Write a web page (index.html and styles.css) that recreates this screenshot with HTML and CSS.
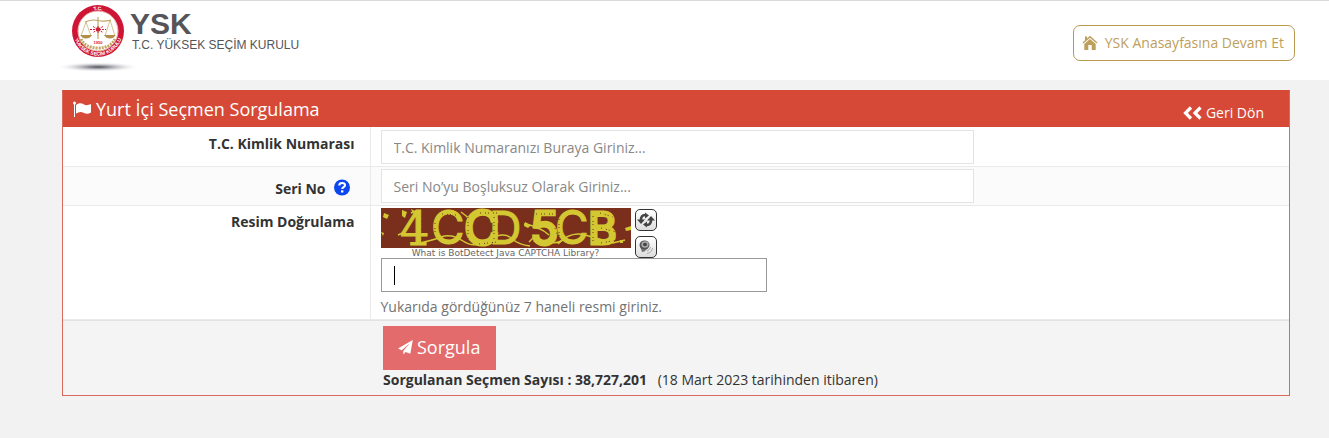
FILE: index.html
```html
<!DOCTYPE html>
<html lang="tr">
  <head>
    <meta charset="utf-8">
    <title>Yurt İçi Seçmen Sorgulama</title>
    <link rel="stylesheet" href="styles.css">
  </head>
  <body>
    <header class="top">
      <div class="brand">
        <svg class="emblem" width="84" height="72" viewBox="0 0 84 72" aria-hidden="true">
          <defs>
            <radialGradient id="shade">
              <stop offset="0" stop-color="#55555f" />
              <stop offset="0.3" stop-color="#a0a0a8" />
              <stop offset="1" stop-color="#fff" stop-opacity="0" />
            </radialGradient>
            <path id="ring_bottom" d="M13.400 26 A24.600 24.600 0 0 0 62.600 26" />
            <path id="ring_top" d="M17 26 A21 21 0 0 1 59 26" />
          </defs>
          <ellipse cx="38" cy="62" rx="42" ry="5" fill="url(#shade)" />
          <circle cx="38" cy="26" r="26" fill="#cf1535" />
          <circle cx="38" cy="26" r="20" fill="#fff" stroke="#e8b0a8" />
          <text class="ring_text"><textPath href="#ring_bottom" startOffset="50%" text-anchor="middle">YÜKSEK SEÇİM KURULU</textPath></text>
          <text class="ring_text"><textPath href="#ring_top" startOffset="50%" text-anchor="middle">T.C.</textPath></text>
          <g fill="none" stroke="#c4a566">
            <path d="M38 12V34M25 17Q32 14 38 15.500T51 15" stroke-width="1.200" />
            <path d="M26 17L21 31M26 17L31 31M50 15L45 31M50 15L55 31" stroke-width=".7" />
            <path d="M21 34Q25 43 38 43T55 34" stroke-width="3" stroke-dasharray="2 1" />
          </g>
          <path d="M20.500 30H32Q30 33.500 26 33.500T20.500 30ZM44 30H55.500Q54 33.500 50 33.500T44 30Z" fill="#b28e48" />
          <circle cx="38" cy="24.500" r="2.200" fill="#d22038" />
          <path d="M30 24.500H46M33 21.500L43 27.500M43 21.500L33 27.500M38 21V28" stroke="#d22038" stroke-dasharray="2 1" />
          <text class="year" x="38" y="39" text-anchor="middle">1950</text>
        </svg>
        <div class="brand_text">
          <strong>YSK</strong>
          <span>T.C. YÜKSEK SEÇİM KURULU</span>
        </div>
      </div>
      <a class="home_link" href="#">
        <svg width="16" height="16" viewBox="0 0 16 16" aria-hidden="true">
          <path d="M8 .8L5 3.500V1.500H3V5.300L.5 7.500L1.400 8.500L8 2.700L14.600 8.500L15.500 7.500Z" fill="currentColor" />
          <path d="M8 4L2.300 9V15H6.300V10H9.700V15H13.700V9Z" fill="currentColor" />
        </svg>
        YSK Anasayfasına Devam Et
      </a>
    </header>

    <form class="panel">
      <div class="panel_head">
        <h1>
          <svg width="19" height="18" viewBox="0 0 19 18" aria-hidden="true">
            <path d="M1.500 3V17" stroke="#fff" />
            <circle cx="1.500" cy="3" r="1.500" fill="#fff" />
            <path d="M3 5C6 2.500 8.500 3 11 4.500C13.500 5.800 15.500 5 18 4V12.500C15.500 14 13 14.200 10.500 12.800C8 11.500 5.500 12 3 13.500Z" fill="#fff" />
          </svg>
          Yurt İçi Seçmen Sorgulama
        </h1>
        <a href="#">
          <svg width="19" height="14" viewBox="0 0 19 14" aria-hidden="true">
            <path d="M8 1.500L2.500 7L8 12.500M17.500 1.500L12 7L17.500 12.500" fill="none" stroke="#fff" stroke-width="3.200" />
          </svg>
          Geri Dön
        </a>
      </div>

      <div class="row">
        <div class="label_cell"><label for="tc_no">T.C. Kimlik Numarası</label></div>
        <div class="field_cell">
          <input class="text_box" type="text" id="tc_no" placeholder="T.C. Kimlik Numaranızı Buraya Giriniz...">
        </div>
      </div>

      <div class="row striped">
        <div class="label_cell seri">
          <label for="seri_no">Seri No</label>
          <svg width="18" height="18" viewBox="0 0 18 18" aria-hidden="true">
            <circle cx="9" cy="8.500" r="8" fill="#0b46f0" />
            <path d="M6.200 6.500C6.300 4.700 7.500 4 9.100 4C10.800 4 12 4.900 12 6.300C12 8.200 9.200 8.100 9.200 10.100" fill="none" stroke="#fff" stroke-width="2.100" />
            <path d="M8 11.300H10.400V13.500H8Z" fill="#fff" />
          </svg>
        </div>
        <div class="field_cell">
          <input class="text_box" type="text" id="seri_no" placeholder="Seri No’yu Boşluksuz Olarak Giriniz...">
        </div>
      </div>

      <div class="row">
        <div class="label_cell resim"><label for="captcha">Resim Doğrulama</label></div>
        <div class="field_cell captcha_cell">
          <div class="captcha">
            <div class="captcha_picture">
              <svg width="250" height="40" viewBox="0 0 250 40" role="img" aria-label="CAPTCHA">
                <rect width="250" height="40" fill="#7a2f1d" />
                <g class="captcha_letters">
                  <text class="serif" x="19" y="37" font-size="46">4</text>
                  <text class="thin" x="50" y="36" font-size="46">C</text>
                  <text class="thick" x="83" y="37" font-size="48">C</text>
                  <text class="thin" x="108" y="36" font-size="45">D</text>
                  <text class="thick" x="149" y="37" font-size="47">5</text>
                  <text class="thin" x="174" y="36" font-size="46">C</text>
                  <text class="thick" x="207" y="36" font-size="44">B</text>
                </g>
                <g fill="none" stroke="#d3c832" stroke-width="1.500">
                  <path d="M33 36Q50 33 60 29T82 33T108 32T130 30T149 38" />
                  <path d="M143 16Q158 18 168 27M177 36Q189 23 204 27T232 35L244 32" />
                  <path d="M17 27L24 24M80 4Q86 8 89 12M167 34Q179 37 184 29M148 34L153 29M30 5L35 3" />
                </g>
                <g fill="#d3c832">
                  <path d="M3 5L8 7L6 11L2 9ZM21 2L26 4L24 10L21 8ZM30 1L34 3L32 6ZM0 24L3 25L2 28ZM144 14L150 17L147 20L143 18ZM239 32H242V35H239ZM244 20L250 18V22L245 23ZM152 33L158 32L156 36Z" />
                </g>
                <path d="M41 8V36M54 15V28M61 6L75 7M87 9V31M99 5L116 5M98 36L116 34M113 9V33M155 6L176 6M174 20L177 30M178 11V28M212 8V34M219 5L232 9M220 20L235 24M220 35L236 32" fill="none" stroke="#7a2f1d" stroke-dasharray="1 4 1 2" />
              </svg>
              <a href="#">What is BotDetect Java CAPTCHA Library?</a>
            </div>
            <div class="captcha_tools">
              <button type="button" aria-label="Resmi yenile">
                <svg width="18" height="18" viewBox="0 0 18 18">
                  <path d="M4 10Q3.500 3.500 9 4M14 8Q14.500 14.500 9 14" fill="none" stroke="#444" stroke-width="2.600" />
                  <path d="M8 1.500L12 4.500L8 7.500ZM10 10.500L6 13.500L10 16.500Z" fill="#444" />
                  <path d="M0 8.500H8L4 13ZM10 9.500H18L14 5Z" fill="#444" />
                </svg>
              </button>
              <button type="button" aria-label="Sesli dinle">
                <svg width="18" height="18" viewBox="0 0 18 18">
                  <path d="M3 8L5 14Q8 14 9 12L12 8Z" fill="#777" />
                  <ellipse cx="7.500" cy="7" rx="5" ry="4.500" fill="#555" />
                  <ellipse cx="8" cy="6.500" rx="3.600" ry="3.200" fill="#aaa" />
                  <ellipse cx="8" cy="6.500" rx="2" ry="1.800" fill="#444" />
                  <path d="M10 13Q13 12 13.500 9M10 15.500Q15 14.500 15.500 10" fill="none" stroke="#aaa" />
                </svg>
              </button>
            </div>
          </div>
          <input class="captcha_box" type="text" id="captcha">
          <p>Yukarıda gördüğünüz 7 haneli resmi giriniz.</p>
        </div>
      </div>

      <div class="panel_foot">
        <button class="submit_btn" type="submit">
          <svg width="15" height="15" viewBox="0 0 15 15" aria-hidden="true">
            <path d="M14.800 0L0 8.600L3.700 10.200L11.800 3.300L5.300 11V14.600L7.700 12L12.300 13.800Z" fill="#fff" />
          </svg>
          Sorgula
        </button>
        <div class="total"><b>Sorgulanan Seçmen Sayısı : 38,727,201</b> <span>(18 Mart 2023 tarihinden itibaren)</span></div>
      </div>
    </form>
  </body>
</html>
```

FILE: styles.css
```css
* {
  margin: 0px;
  padding: 0px;
  box-sizing: border-box;
}
body {
  background-color: #f2f2f2;
  font-family: "Open Sans", sans-serif;
  font-size: 14px;
  line-height: 20px;
  color: #333;
}
svg {
  display: block;
  flex-shrink: 0;
}
a {
  text-decoration: none;
}

.top {
  display: flex;
  justify-content: space-between;
  align-items: flex-start;
  height: 80px;
  padding: 4px 34px 0px 60px;
  background-color: white;
  border-top: 1px solid #d9d9d9;
}
.brand {
  display: flex;
}
.brand_text {
  font-family: "Liberation Sans", Arial, sans-serif;
  color: #555559;
  margin: 5px 0px 0px -14px;
}
.brand_text strong {
  display: block;
  font-size: 30px;
  line-height: 28px;
}
.brand_text span {
  display: block;
  font-size: 12px;
  line-height: 14px;
  padding-left: 2px;
}
.ring_text {
  font: bold 5px "Liberation Sans", sans-serif;
  fill: white;
}
.year {
  font: bold 4px "Liberation Sans", sans-serif;
  fill: #cf1535;
}
.home_link {
  display: flex;
  align-items: center;
  gap: 7px;
  height: 36px;
  margin-top: 20px;
  padding: 0px 10px 0px 8px;
  border: 1px solid #b99a50;
  border-radius: 7px;
  color: #bd9f5c;
}

.panel {
  margin: 10px 39px 20px 62px;
  border: 1px solid #d9695d;
  border-top-color: #d64937;
  background-color: white;
}
.panel_head {
  display: flex;
  justify-content: space-between;
  height: 36px;
  padding: 0px 25px 0px 10px;
  background-color: #d64937;
  color: white;
}
.panel_head h1 {
  display: flex;
  align-items: center;
  gap: 4px;
  font-size: 18px;
  font-weight: normal;
}
.panel_head a {
  display: flex;
  align-items: center;
  gap: 4px;
  padding-top: 8px;
  color: white;
}

.row {
  display: flex;
  border-bottom: 1px solid #eaeaea;
}
.striped {
  background-color: #fbfbfb;
}
.label_cell {
  width: 25%;
  padding: 7px 15px 0px 10px;
  text-align: right;
  font-weight: bold;
}
.seri {
  display: flex;
  justify-content: flex-end;
  gap: 7px;
  padding-top: 12px;
  padding-right: 19px;
}
.resim {
  padding-top: 6px;
}
.field_cell {
  flex: 1;
  padding: 3px 10px 2px;
  border-left: 1px solid #eaeaea;
}
.striped .field_cell {
  padding-top: 2px;
}
.text_box,
.captcha_box {
  display: block;
  width: 66%;
  height: 34px;
  padding: 6px 12px;
  border: 1px solid #e3e3e3;
  background-color: white;
  font: inherit;
  outline: none;
}
.text_box::placeholder {
  color: #888;
  opacity: 1;
}
.captcha_cell {
  padding-top: 2px;
}
.captcha_cell p {
  padding: 5px 0px 0px;
  color: #737373;
}
.captcha {
  display: flex;
  gap: 4px;
  height: 50px;
}
.captcha_picture {
  width: 250px;
  text-align: center;
}
.captcha_picture a {
  display: block;
  font: 9px/10px "DejaVu Sans", sans-serif;
  color: #666;
}
.captcha_tools {
  display: flex;
  flex-direction: column;
  gap: 5px;
  padding-top: 1px;
}
.captcha_tools button {
  display: flex;
  align-items: center;
  justify-content: center;
  flex-shrink: 0;
  width: 22px;
  height: 22px;
  border: 1px solid #333;
  border-radius: 5px;
  background: linear-gradient(white, #ddd);
}
/* text cursor of the active box */
.captcha_box {
  width: 43%;
  border-color: #999;
  background: linear-gradient(#000, #000) 12px 7px / 1px 19px no-repeat white;
}
.captcha_letters {
  font-family: Inter, sans-serif;
  fill: #d3c832;
  stroke: #d3c832;
}
.serif {
  font-family: "DejaVu Serif", serif;
}
.thick {
  stroke-width: 3;
}
.thin {
  stroke-width: 1;
}

.panel_foot {
  padding: 5px 10px 5px 320px;
  border-top: 1px solid #e3e3e3;
  background-color: #f4f4f4;
}
.submit_btn {
  display: flex;
  align-items: center;
  gap: 4px;
  height: 44px;
  padding: 0px 16px 2px 15px;
  border: none;
  background-color: #e36b6b;
  color: white;
  font: 18px "Open Sans", sans-serif;
}
.total span {
  padding-left: 7px;
}
```
